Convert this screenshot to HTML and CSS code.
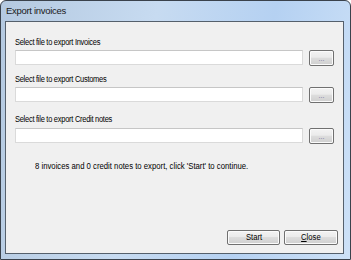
FILE: index.html
```html
<!DOCTYPE html>
<html>
<head>
<meta charset="utf-8">
<link rel="stylesheet" href="styles.css">
</head>
<body>
<div class="window">
  <div class="titlebar">Export invoices</div>
  <div class="client">
    <div class="group first">
      <div class="label">Select file to export Invoices</div>
      <div class="row"><div class="field"></div><div class="btn small">...</div></div>
    </div>
    <div class="group second">
      <div class="label">Select file to export Customes</div>
      <div class="row"><div class="field"></div><div class="btn small">...</div></div>
    </div>
    <div class="group third">
      <div class="label">Select file to export Credit notes</div>
      <div class="row"><div class="field"></div><div class="btn small">...</div></div>
    </div>
    <div class="message">8 invoices and 0 credit notes to export, click 'Start' to continue.</div>
    <div class="footer">
      <div class="btn big"><span class="cap">Start</span></div>
      <div class="btn big close"><span class="cap"><u>C</u>lose</span></div>
    </div>
  </div>
</div>
</body>
</html>
```

FILE: styles.css
```css
html, body {
  margin: 0;
  padding: 0;
  background: #ffffff;
}
.window {
  width: 351px;
  height: 260px;
  box-sizing: border-box;
  border: 1px solid #3a424c;
  border-radius: 6px 6px 0 0;
  background: linear-gradient(100deg, #b4c9e0 0%, #c7dbf1 40%, #b5d1f2 70%, #cde1f7 100%);
  display: flex;
  flex-direction: column;
  padding: 0 6px 5px 4px;
  font-family: "Liberation Sans", Arial, sans-serif;
}
.titlebar {
  height: 20px;
  line-height: 20px;
  padding-left: 1px;
  font-size: 9.5px;
  letter-spacing: -0.3px;
  color: #1a1a1a;
}
.client {
  flex: 1;
  border: 1px solid #55606c;
  background: #f0f0f0;
  display: flex;
  flex-direction: column;
  padding: 14px 8px 8px 9px;
}
.label {
  font-size: 8.5px;
  height: 12px;
  line-height: 12px;
  color: #000;
  letter-spacing: -0.3px;
  transform: scaleX(0.88);
  transform-origin: left center;
}
.row {
  display: flex;
  align-items: flex-start;
  margin-top: 2px;
}
.field {
  width: 288px;
  height: 15px;
  box-sizing: border-box;
  background: #ffffff;
  border: 1px solid #dadada;
  border-top-color: #c6c6c6;
}
.btn {
  box-sizing: border-box;
  border: 1px solid #707070;
  border-radius: 2px;
  background: linear-gradient(#f3f3f3 0%, #ebebeb 45%, #dddddd 50%, #cfcfcf 100%);
  box-shadow: inset 0 0 0 1px #fbfbfb;
  font-size: 8.5px;
  color: #000;
  text-align: center;
}
.btn.small {
  width: 25px;
  height: 16px;
  margin-left: 6px;
  line-height: 16px;
  font-size: 7px;
  color: #6a6a9a;
}
.cap {
  display: inline-block;
  transform: scaleX(0.9);
}
.second { margin-top: 7px; }
.third { margin-top: 10px; }
.third .row { margin-top: 3px; }
.message {
  margin-top: 16px;
  padding-left: 20px;
  font-size: 8.5px;
  line-height: 12px;
  transform: scaleX(0.91);
  transform-origin: 20px center;
}
.footer {
  margin-top: auto;
  display: flex;
  justify-content: flex-end;
  gap: 4px;
  margin-right: -3px;
}
.btn.big {
  width: 53px;
  height: 15px;
  line-height: 13px;
}
.btn.close { width: 54px; }
```
